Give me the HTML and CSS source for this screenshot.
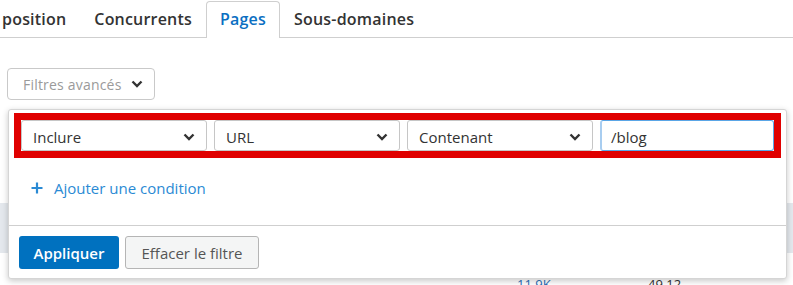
FILE: index.html
```html
<!DOCTYPE html>
<html lang="fr">
<head>
<meta charset="utf-8">
<link rel="stylesheet" href="styles.css">
</head>
<body>
<nav class="tabs">
  <div class="tab first">position</div>
  <div class="tab">Concurrents</div>
  <div class="tab active">Pages</div>
  <div class="tab">Sous-domaines</div>
</nav>
<div class="area">
  <div class="toolbar">
    <button class="adv">Filtres avancés
      <svg class="chev" width="12" height="8" viewBox="0 0 12 8"><path d="M1.5 1.5 L6 6 L10.5 1.5" fill="none" stroke="#333" stroke-width="2.4"/></svg>
    </button>
  </div>
  <div class="table">
    <div class="thead"></div>
    <div class="row"><span class="c1">11,9K</span><span class="c2">49,12</span></div>
  </div>
  <div class="panel">
    <div class="cond">
      <div class="sel">Inclure<svg class="chev" width="12" height="8" viewBox="0 0 12 8"><path d="M1.5 1.5 L6 6 L10.5 1.5" fill="none" stroke="#333" stroke-width="2.4"/></svg></div>
      <div class="sel">URL<svg class="chev" width="12" height="8" viewBox="0 0 12 8"><path d="M1.5 1.5 L6 6 L10.5 1.5" fill="none" stroke="#333" stroke-width="2.4"/></svg></div>
      <div class="sel">Contenant<svg class="chev" width="12" height="8" viewBox="0 0 12 8"><path d="M1.5 1.5 L6 6 L10.5 1.5" fill="none" stroke="#333" stroke-width="2.4"/></svg></div>
      <div class="inp">/blog</div>
    </div>
    <div class="add">
      <svg width="12" height="12" viewBox="0 0 12 12"><path d="M6 0.5 V11.5 M0.5 6 H11.5" stroke="#2a8ad4" stroke-width="2.2"/></svg>
      <span>Ajouter une condition</span>
    </div>
    <div class="foot">
      <button class="apply">Appliquer</button>
      <button class="clear">Effacer le filtre</button>
    </div>
  </div>
</div>
</body>
</html>
```
FILE: styles.css
```css
* { box-sizing: border-box; }
html, body { margin: 0; padding: 0; background: #fff; }
body { width: 793px; height: 285px; overflow: hidden; font-family: "Open Sans", "Noto Sans", sans-serif; color: #333; }

.tabs { display: flex; height: 38px; border-bottom: 1px solid #cfcfcf; padding-top: 1px; }
.tab { padding: 0 13px; font-size: 16px; font-weight: 600; line-height: 34px; color: #333; border: 1px solid transparent; border-bottom: none; border-radius: 4px 4px 0 0; letter-spacing: 0.2px; }
.tab.first { padding-left: 1px; }
.tab.active { color: #0a6fc2; border-color: #cfcfcf; background: #fff; height: 37px; margin-bottom: -1px; padding: 0 13px; }

.area { position: relative; }
.toolbar { padding: 30px 0 0 7px; height: 75px; }
.adv { display: flex; align-items: center; gap: 9px; height: 32px; width: 148px; padding: 0 0 0 15px; border: 1px solid #c9c9c9; border-radius: 4px; background: #fff; font-family: inherit; font-size: 14px; letter-spacing: 0.2px; color: #9a9a9a; }

.table { margin-top: 90px; }
.thead { height: 50px; background: #e4e8ed; }
.row { position: relative; height: 40px; font-size: 13px; }
.c1 { position: absolute; left: 517px; top: 22px; color: #2a6fb8; }
.c2 { position: absolute; left: 648px; top: 22px; color: #333; }

.panel { position: absolute; left: 8px; top: 71px; width: 779px; height: 170px; background: #fff; border: 1px solid #d5d5d5; border-radius: 3px; box-shadow: 0 2px 6px rgba(0,0,0,0.22); }
.cond { display: flex; gap: 7px; margin: 3px 5px 0 5px; border: 7px solid #e00000; height: 45px; }
.sel { flex: 0 0 186px; display: flex; align-items: center; justify-content: space-between; padding: 2px 11px 0 11px; border: 1px solid #c6c6c6; border-radius: 3px; font-size: 15px; color: #333; background: #fff; }
.inp { flex: 1; display: flex; align-items: center; padding: 2px 0 0 9px; border: 1px solid #5aa6e6; border-left: 2px solid #a8cdf0; border-radius: 3px; font-size: 15px; color: #333; }

.add { display: flex; align-items: center; gap: 11px; padding: 0 0 8px 22px; height: 67px; font-size: 15px; color: #2a8ad4; }

.foot { border-top: 1px solid #cfcfcf; display: flex; gap: 6px; padding: 10px 0 0 10px; }
.foot button { height: 33px; border-radius: 3px; font-family: inherit; font-size: 15px; }
.apply { width: 100px; background: #0071bf; color: #fff; border: none; font-weight: 600; }
.clear { width: 134px; background: #f4f5f5; color: #555; border: 1px solid #b5b5b5; }
```
